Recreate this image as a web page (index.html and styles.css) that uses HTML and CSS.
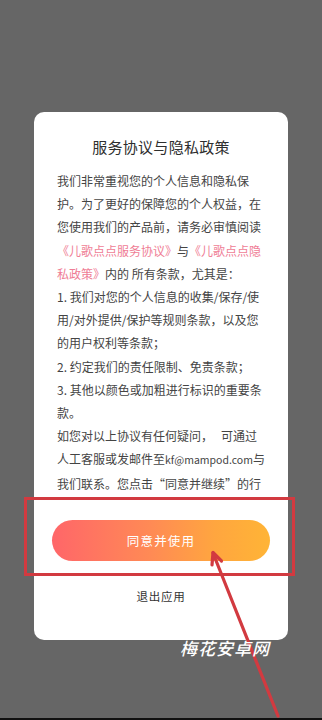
FILE: index.html
```html
<!DOCTYPE html>
<html lang="zh-CN">
<head>
<meta charset="utf-8">
<title>服务协议与隐私政策</title>
<link rel="stylesheet" href="styles.css">
</head>
<body>
<div class="screen">
  <div class="dialog">
    <h1 class="title">服务协议与隐私政策</h1>
    <div class="body">
      <p class="para">我们非常重视您的个人信息和隐私保护。为了更好的保障您的个人权益，在您使用我们的产品前，请务必审慎阅读<span class="link">《儿歌点点服务协议》</span>与<span class="link">《儿歌点点隐私政策》</span>内的 所有条款，尤其是：</p>
      <p class="para">1. 我们对您的个人信息的收集/保存/使用/对外提供/保护等规则条款，以及您的用户权利等条款；</p>
      <p class="para">2. 约定我们的责任限制、免责条款；</p>
      <p class="para">3. 其他以颜色或加粗进行标识的重要条款。</p>
      <p class="para">如您对以上协议有任何疑问，&nbsp;&nbsp;&nbsp;可通过人工客服或发邮件至<span class="email">kf@mampod.com</span>与我们联系。您点击“同意并继续”的行为即表示您已阅读完毕并同意以上协议的全部内容。</p>
    </div>
    <button class="agree">同意并使用</button>
    <div class="quit">退出应用</div>
  </div>
  <div class="mark-box"></div>
  <svg class="arrow" width="322" height="720" viewBox="0 0 322 720">
    <line x1="213" y1="553" x2="278" y2="716" stroke="#d23a40" stroke-width="3.2" stroke-linecap="round"/>
    <polyline points="221.5,561 213,552.5 212,565" fill="none" stroke="#d23a40" stroke-width="3.2" stroke-linecap="round" stroke-linejoin="round"/>
  </svg>
  <div class="watermark">梅花安卓网</div>
</div>
</body>
</html>
```
FILE: styles.css
```css
* { box-sizing: border-box; }
html, body {
  margin: 0;
  padding: 0;
  background: #666666;
}
body {
  font-family: "Noto Sans CJK SC", "Noto Sans", sans-serif;
}
.screen {
  position: relative;
  width: 322px;
  height: 720px;
  overflow: hidden;
  padding-top: 112px;
  border-bottom: 2px solid #111;
}
.dialog {
  width: 254px;
  margin-left: 34px;
  background: #ffffff;
  border-radius: 10px;
  padding: 24px 23px 35px;
  display: flex;
  flex-direction: column;
  align-items: center;
}
.title {
  margin: 0;
  font-size: 15px;
  line-height: 22px;
  font-weight: 400;
  color: #2e2e2e;
  letter-spacing: 0.3px;
}
.body {
  margin-top: 11px;
  width: 208px;
  height: 325px;
  overflow: hidden;
}
.para {
  margin: 0;
  font-size: 12px;
  line-height: 23.2px;
  color: #444444;
  text-align: left;
}
.link {
  color: #ef7d95;
}
.email {
  font-size: 10.5px;
}
.agree {
  margin-top: 26px;
  width: 218px;
  height: 41px;
  border: none;
  border-radius: 21px;
  background: linear-gradient(90deg, #ff6669 0%, #ff8a55 45%, #ffa63f 75%, #ffb436 100%);
  color: #ffffff;
  font-family: "Noto Sans CJK SC", "Noto Sans", sans-serif;
  font-size: 12.5px;
  letter-spacing: 1.2px;
  padding: 0;
}
.quit {
  margin-top: 27px;
  font-size: 11.5px;
  line-height: 17px;
  letter-spacing: 0.8px;
  color: #333333;
}
.mark-box {
  position: absolute;
  left: 24px;
  top: 497px;
  width: 271px;
  height: 79px;
  border: 3.5px solid #d23a40;
}
.arrow {
  position: absolute;
  left: 0;
  top: 0;
}
.watermark {
  position: absolute;
  left: 180px;
  top: 637px;
  font-size: 17px;
  line-height: 22px;
  font-weight: 500;
  font-style: italic;
  letter-spacing: 1px;
  color: #ffffff;
}
```
